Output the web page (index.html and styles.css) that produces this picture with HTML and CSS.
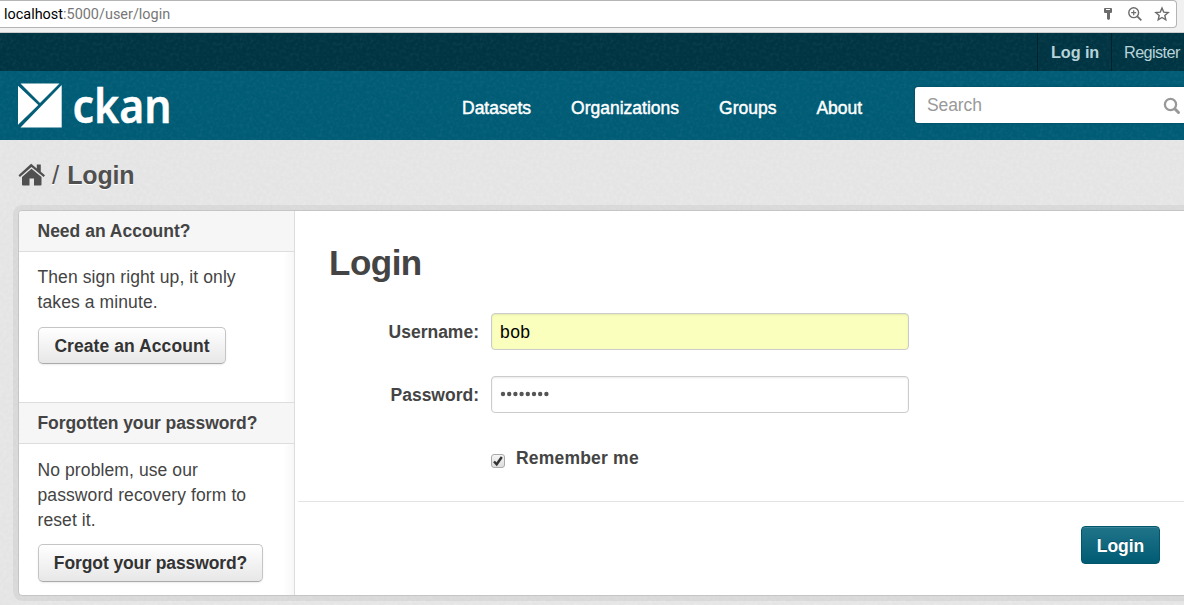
FILE: index.html
```html
<!DOCTYPE html>
<html lang="en">
<head>
<meta charset="utf-8">
<title>Login - CKAN</title>
<link rel="stylesheet" href="styles.css">
</head>
<body>
<div class="browser">
  <div class="address">
    <span class="url"><span class="host">localhost</span>:5000/user/login</span>
    <svg class="tool" width="14" height="16" viewBox="0 0 14 16"><path fill="#6b6b6b" fill-rule="evenodd" d="M4 2h6q1 0 1 1v3q0 1-1 1H9v6l-1.500 1L6 13V7H4Q3 7 3 6V3q0-1 1-1zm1 1v1h4V3z"/></svg>
    <svg class="tool" width="16" height="16" viewBox="0 0 16 16" fill="none" stroke="#6b6b6b"><circle cx="6.700" cy="6.700" r="4.900" stroke-width="1.400"/><path stroke-width="1.800" d="M10.300 10.300l4 4"/><path stroke-width="1.200" d="M4.200 6.700h5M6.700 4.200v5"/></svg>
    <svg class="tool" width="16" height="16" viewBox="0 0 16 16"><path fill="none" stroke="#6b6b6b" stroke-width="1.400" d="M8 2l1.700 4.100 4.500.4-3.400 2.900 1 4.400L8 11.500l-3.800 2.300 1-4.400-3.400-2.900 4.500-.4z"/></svg>
  </div>
</div>
<div class="account"><a class="acct strong">Log in</a><a class="acct">Register</a></div>
<header class="masthead">
  <svg class="logo" width="160" height="69" viewBox="0 -11 160 69">
    <path fill="#fff" d="M2.500 1.500h39L22 21zM0 3.800L20.300 23 0 42.700zM43.700 3V45.500H2.500z"/>
    <text class="logo-text" x="54.500" y="40.500" textLength="99" lengthAdjust="spacingAndGlyphs">ckan</text>
  </svg>
  <nav class="nav"><a>Datasets</a><a>Organizations</a><a>Groups</a><a>About</a></nav>
  <div class="search"><span>Search</span>
    <svg width="18" height="18" viewBox="0 0 18 18" fill="none" stroke="#999"><circle cx="7.500" cy="7.500" r="5.600" stroke-width="2.300"/><path stroke-width="3" stroke-linecap="round" d="M12 12l3.500 3.500"/></svg>
  </div>
</header>
<main class="main">
  <div class="crumbs">
    <svg width="28" height="24" viewBox="0 0 28 24" fill="#505050"><path d="M13.500 5.700L23.500 14v7.500q0 1-1 1H16v-7h-4.500v7H5q-1 0-1-1V14z"/><path d="M13.500 1L18.800 5.400V1.600h4v7.200l4.200 3.500-1.400 1.700L13.500 3.900 1.900 14 .5 12.300 12 1.700q1.500-1.200 1.500-.7z"/></svg>
    <span class="slash">/</span><strong>Login</strong>
  </div>
  <div class="panel">
    <aside class="side">
      <section class="module">
        <h2>Need an Account?</h2>
        <div class="body"><p>Then sign right up, it only<br>takes a minute.</p><a class="btn">Create an Account</a></div>
      </section>
      <section class="module second">
        <h2>Forgotten your password?</h2>
        <div class="body"><p>No problem, use our<br>password recovery form to<br>reset it.</p><a class="btn wide">Forgot your password?</a></div>
      </section>
    </aside>
    <form class="form">
      <h1>Login</h1>
      <div class="row"><label>Username:</label><div class="field filled">bob</div></div>
      <div class="row"><label>Password:</label><div class="field"><svg class="dots" width="52" height="8" viewBox="0 0 52 8"><path d="M3 4h44" stroke="#555" stroke-width="4.400" stroke-linecap="round" stroke-dasharray="0 6.200"/></svg></div></div>
      <div class="remember"><span class="check"><svg width="12" height="12" viewBox="0 0 12 12"><path d="M2 6.500l2.700 2.800L9.800 2" fill="none" stroke="#333" stroke-width="2.400"/></svg></span><span>Remember me</span></div>
      <div class="actions"><a class="primary">Login</a></div>
    </form>
  </div>
</main>
</body>
</html>
```
FILE: styles.css
```css
* { box-sizing: border-box; }
:root {
  --grain: url("data:image/svg+xml,%3Csvg xmlns='http://www.w3.org/2000/svg' width='120' height='120'%3E%3Cfilter id='n' x='0' y='0' width='100%25' height='100%25'%3E%3CfeTurbulence type='fractalNoise' baseFrequency='.3' numOctaves='3' stitchTiles='stitch'/%3E%3CfeColorMatrix values='0 0 0 0 1 0 0 0 0 1 0 0 0 0 1 .35 0 0 0 -.12'/%3E%3C/filter%3E%3Crect width='120' height='120' filter='url(%23n)'/%3E%3C/svg%3E");
  --grain-faint: url("data:image/svg+xml,%3Csvg xmlns='http://www.w3.org/2000/svg' width='120' height='120'%3E%3Cfilter id='n' x='0' y='0' width='100%25' height='100%25'%3E%3CfeTurbulence type='fractalNoise' baseFrequency='.3' numOctaves='3' stitchTiles='stitch'/%3E%3CfeColorMatrix values='0 0 0 0 1 0 0 0 0 1 0 0 0 0 1 .1 0 0 0 -.04'/%3E%3C/filter%3E%3Crect width='120' height='120' filter='url(%23n)'/%3E%3C/svg%3E");
}
body {
  margin: 0;
  width: 1184px;
  height: 605px;
  overflow: hidden;
  display: flex;
  flex-direction: column;
  font: 17.5px/25px "Liberation Sans", Arial, sans-serif;
  color: #444;
}
.browser { height: 33px; flex: none; background: #f1f1f1; border-bottom: 1px solid #ccc; }
.address {
  width: 1177px;
  height: 28px;
  display: flex;
  align-items: center;
  padding: 0 6px 0 4px;
  background: #fff;
  border: 1px solid #b5b5b5;
  border-left: 0;
  border-radius: 0 4px 4px 0;
}
.url { flex: 1; padding-top: 1px; font: 14.45px/21px Roboto, sans-serif; color: #777; }
.host { color: #000; }
.tool { margin-left: 11.5px; }
.account {
  height: 38px;
  flex: none;
  display: flex;
  justify-content: flex-end;
  background: var(--grain-faint), #003442;
}
.acct {
  padding: 0 3px 0 12px;
  width: 73px;
  border-left: 1px solid #00222d;
  font-size: 16.25px;
  line-height: 39px;
  letter-spacing: -.6px;
  color: #b7d3da;
  white-space: nowrap;
}
.acct.strong { width: 74px; font-weight: bold; padding-left: 13px; letter-spacing: -.1px; }
.masthead {
  height: 69px;
  flex: none;
  display: flex;
  align-items: flex-start;
  background: var(--grain-faint), #005b75;
}
.logo { flex: none; margin-left: 18px; }
.logo-text { font: 600 47px "Noto Sans", "Open Sans", sans-serif; fill: #fff; stroke: #fff; stroke-width: .5px; }
.nav {
  flex: none;
  width: 453px;
  margin-left: 284px;
  padding-top: 25px;
  display: flex;
  gap: 40px;
  color: #fff;
  letter-spacing: 0;
  -webkit-text-stroke: .45px #fff;
}
.search {
  flex: none;
  width: 275px;
  height: 36px;
  margin-top: 16px;
  padding: 0 9px 0 12px;
  display: flex;
  align-items: center;
  justify-content: space-between;
  background: #fff;
  border-radius: 3px;
  box-shadow: 0 0 2px #003f52;
  color: #999;
  letter-spacing: -.1px;
}
.search svg { margin-top: 2px; }
.main { height: 465px; flex: none; background: var(--grain), #e4e4e4; padding: 18px 0 0 18px; }
.crumbs {
  height: 34px;
  margin-bottom: 18px;
  display: flex;
  align-items: center;
  color: #505050;
  font-size: 26px;
  text-shadow: 0 1px 0 #fff;
}
.slash { margin: 0 8px 0 6px; }
.crumbs strong { font-size: 25px; letter-spacing: -.2px; }
.panel {
  width: 1190px;
  height: 386px;
  display: flex;
  background: #fff;
  border: 1px solid #c5c5c5;
  border-radius: 4px;
  box-shadow: 0 0 0 5px rgba(0, 0, 0, .05);
}
.side {
  width: 276px;
  flex: none;
  border-right: 1px solid #ddd;
  background: linear-gradient(90deg, transparent 96%, #f7f7f7);
}
.module h2 {
  margin: 0;
  height: 41px;
  padding-left: 18.5px;
  background: #f6f6f6;
  border-bottom: 1px solid #ddd;
  border-radius: 3px 0 0;
  font-size: 17.5px;
  line-height: 41px;
}
.second h2 { height: 42px; border-top: 1px solid #ddd; border-radius: 0; letter-spacing: -.08px; }
.module .body { height: 150px; padding: 13px 0 0 18.5px; }
.second .body { padding-top: 14px; }
.module p { margin: 0 0 12px; letter-spacing: .1px; }
.second p { margin-bottom: 11px; }
.btn {
  display: block;
  width: 188px;
  height: 37px;
  margin-left: .5px;
  border: 1px solid #c5c5c5;
  border-bottom-color: #aaa;
  border-radius: 5px;
  background: linear-gradient(#fff, #e7e7e7);
  box-shadow: 0 1px 2px rgba(0, 0, 0, .08);
  color: #333;
  font-weight: bold;
  letter-spacing: .07px;
  line-height: 36px;
  text-align: center;
}
.btn.wide { width: 225px; height: 38px; letter-spacing: -.1px; }
.form { flex: 1; margin-left: 3px; }
h1 { margin: 32px 0 30px 31px; font-size: 35px; line-height: 40px; letter-spacing: -.5px; }
.row { height: 37px; margin-bottom: 26px; display: flex; }
.row label { width: 181px; margin-right: 12px; font-weight: bold; text-align: right; line-height: 39px; }
.field {
  width: 418px;
  height: 37px;
  padding-left: 8px;
  border: 1px solid #ccc;
  border-radius: 4px;
  box-shadow: inset 0 1px 2px rgba(0, 0, 0, .09);
  color: #000;
  letter-spacing: .4px;
  line-height: 37px;
}
.dots { display: block; margin-top: 13px; }
.filled { background: #faffbd; }
.remember { margin: 33px 0 30px 193px; height: 25px; display: flex; gap: 11px; font-weight: bold; letter-spacing: .2px; }
.check {
  width: 14px;
  height: 14px;
  margin-top: 8px;
  display: flex;
  border: 1px solid #aaa;
  border-radius: 3px;
  background: linear-gradient(#f5f5f5, #ddd);
}
.actions { border-top: 1px solid #e3e3e3; padding: 24px 0 0 783px; }
.primary {
  display: block;
  width: 79px;
  height: 38px;
  border: 1px solid #00566d;
  border-radius: 4px;
  background: linear-gradient(#207489, #005b73);
  box-shadow: inset 0 1px 0 #3c8598;
  color: #fff;
  font-weight: bold;
  line-height: 38px;
  text-align: center;
  text-shadow: 0 -1px 0 rgba(0, 0, 0, .25);
}
```
